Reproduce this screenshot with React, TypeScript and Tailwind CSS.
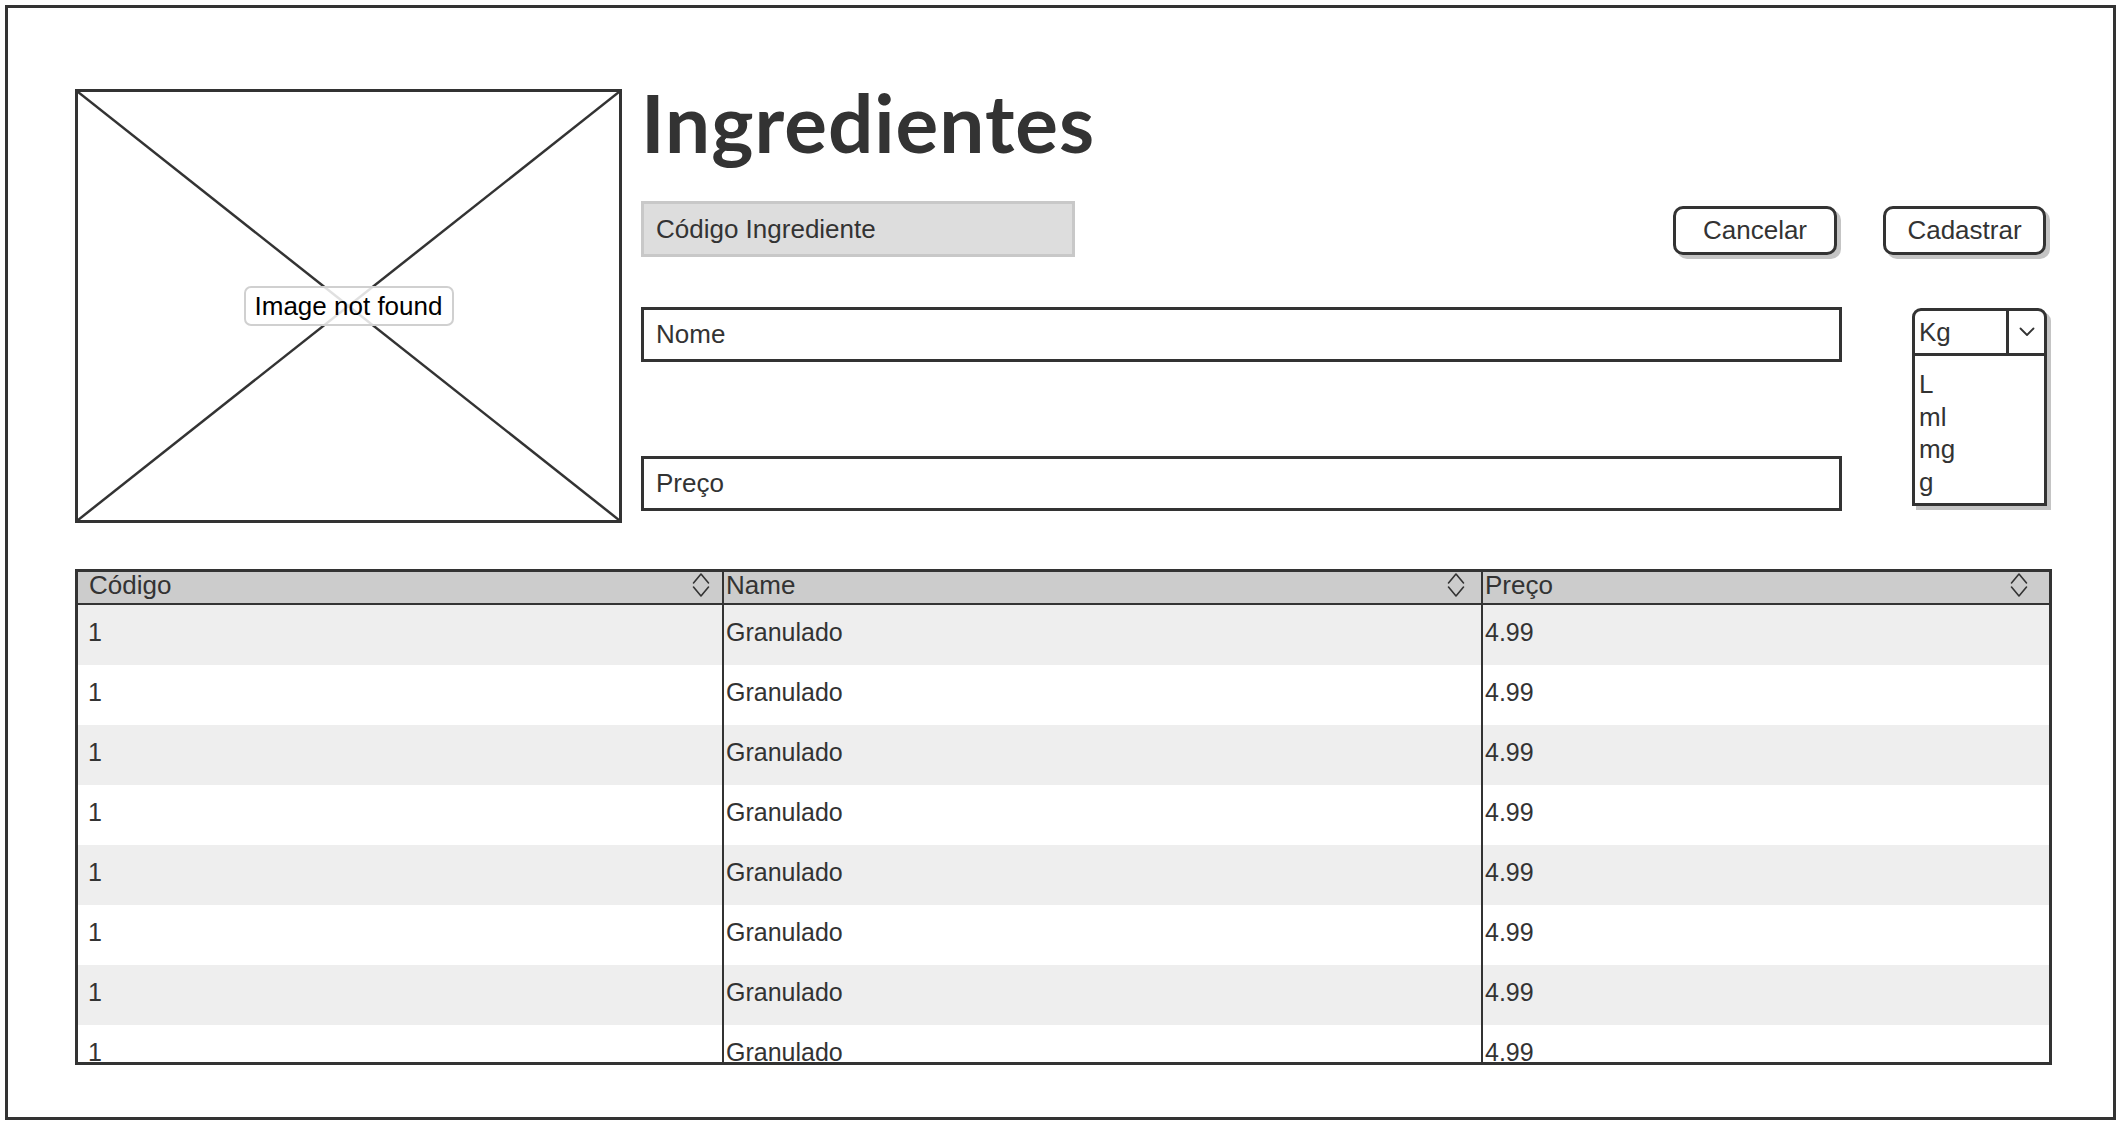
import React from "react";

const SortIcon = () => (
  <svg width="18" height="26" viewBox="0 0 18 26" fill="none" stroke="#333" strokeWidth="1.6" strokeLinecap="round" strokeLinejoin="round">
    <path d="M1.5 11 L9 2 L16.5 11" />
    <path d="M1.5 15 L9 24 L16.5 15" />
  </svg>
);

const rows = [0, 1, 2, 3, 4, 5, 6, 7];

export default function App() {
  return (
    <div className="w-[2124px] h-[1126px] bg-white pl-[5px] pt-[5px] pr-[8px] pb-[6px] text-[#333] font-['Liberation_Sans',Arial,sans-serif]">
      <div className="h-full border-[3px] border-[#333] pl-[67px] pt-[74px] pr-[61px]">
        {/* Top section */}
        <div className="flex items-start">
          <div className="relative mt-[7px] w-[547px] h-[434px] shrink-0 border-[3px] border-[#333] flex items-center justify-center">
            <svg className="absolute inset-0 w-full h-full" viewBox="0 0 100 100" preserveAspectRatio="none">
              <line x1="0" y1="0" x2="100" y2="100" stroke="#333" strokeWidth="2.5" vectorEffect="non-scaling-stroke" />
              <line x1="100" y1="0" x2="0" y2="100" stroke="#333" strokeWidth="2.5" vectorEffect="non-scaling-stroke" />
            </svg>
            <div className="relative bg-white/85 border-[2px] border-[#d0d0d0] rounded-[7px] w-[210px] h-[40px] flex items-center justify-center text-[26px] text-black">
              Image not found
            </div>
          </div>

          <div className="flex-1 ml-[19px] mr-[5px] flex flex-col">
            <h1 className="h-[80px] leading-[80px] text-[80px] font-bold tracking-[1px] font-['Lato',sans-serif] text-[#333]">
              Ingredientes
            </h1>

            <div className="mt-[39px] flex items-start justify-between pr-[1px]">
              <div className="w-[434px] h-[56px] bg-[#dddddd] border-[3px] border-[#c8c8c8] flex items-center pl-[12px] text-[26px]">
                Código Ingrediente
              </div>
              <div className="mt-[5px] flex gap-[46px]">
                <button className="w-[164px] h-[49px] border-[3px] border-[#333] rounded-[10px] shadow-[4px_4px_0_#c4c4c4] bg-white text-[26px] flex items-center justify-center">
                  Cancelar
                </button>
                <button className="w-[163px] h-[49px] border-[3px] border-[#333] rounded-[10px] shadow-[4px_4px_0_#c4c4c4] bg-white text-[26px] flex items-center justify-center">
                  Cadastrar
                </button>
              </div>
            </div>

            <div className="mt-[50px] flex items-start justify-between">
              <div className="w-[1201px] flex flex-col gap-[94px]">
                <div className="h-[55px] border-[3px] border-[#333] flex items-center pl-[12px] text-[26px]">Nome</div>
                <div className="h-[55px] border-[3px] border-[#333] flex items-center pl-[12px] text-[26px]">Preço</div>
              </div>
              <div className="mt-[1px] w-[135px] h-[198px] border-[3px] border-[#333] rounded-t-[9px] shadow-[4px_4px_0_#c4c4c4] bg-white flex flex-col">
                <div className="h-[45px] flex border-b-[3px] border-[#333]">
                  <div className="flex-1 flex items-center pl-[4px] text-[26px]">Kg</div>
                  <div className="w-[38px] border-l-[3px] border-[#333] flex items-center justify-center">
                    <svg width="16" height="10" viewBox="0 0 16 10" fill="none" stroke="#333" strokeWidth="1.8" strokeLinecap="round" strokeLinejoin="round">
                      <path d="M1.5 1.5 L8 8 L14.5 1.5" />
                    </svg>
                  </div>
                </div>
                <div className="pl-[4px] pt-[12px] text-[26px] leading-[32.5px]">
                  <div>L</div>
                  <div>ml</div>
                  <div>mg</div>
                  <div>g</div>
                </div>
              </div>
            </div>
          </div>
        </div>

        {/* Table */}
        <div className="mt-[46px] h-[496px] border-[3px] border-[#333] overflow-hidden">
          <div className="grid grid-cols-[644px_759px_1fr] grid-rows-[31px] h-[33px] bg-[#cccccc] border-b-[2px] border-[#333] text-[26px] leading-[26px]">
            <div className="flex items-center justify-between pl-[11px] pr-[12px] pb-[5px]">
              <span>Código</span>
              <SortIcon />
            </div>
            <div className="flex items-center justify-between border-l-[2px] border-[#333] pl-[2px] pr-[16px] pb-[5px]">
              <span>Name</span>
              <SortIcon />
            </div>
            <div className="flex items-center justify-between border-l-[2px] border-[#333] pl-[2px] pr-[21px] pb-[5px]">
              <span>Preço</span>
              <SortIcon />
            </div>
          </div>
          {rows.map((i) => (
            <div
              key={i}
              className={
                i % 2 === 0
                  ? "grid grid-cols-[644px_759px_1fr] h-[60px] shrink-0 bg-[#eeeeee] text-[25px]"
                  : "grid grid-cols-[644px_759px_1fr] h-[60px] shrink-0 bg-white text-[25px]"
              }
            >
              <div className="flex items-center pl-[10px] pb-[5px]">1</div>
              <div className="flex items-center border-l-[2px] border-[#333] pl-[2px] pb-[5px]">Granulado</div>
              <div className="flex items-center border-l-[2px] border-[#333] pl-[2px] pb-[5px]">4.99</div>
            </div>
          ))}
        </div>
      </div>
    </div>
  );
}
